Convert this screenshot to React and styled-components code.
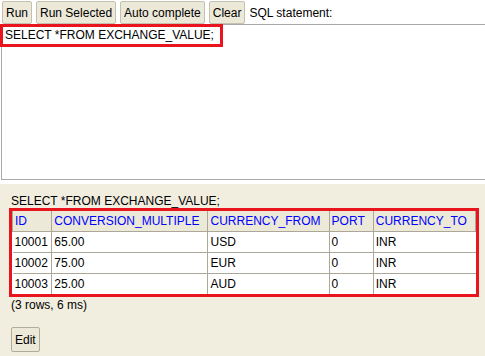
import React from "react";
import styled, { createGlobalStyle } from "styled-components";

const GlobalStyle = createGlobalStyle`
  body {
    margin: 0;
    background: #ffffff;
    font-family: "Liberation Sans", Arial, sans-serif;
    font-size: 12px;
    color: #000000;
  }
`;

const Page = styled.div`
  width: 485px;
  height: 356px;
  display: flex;
  flex-direction: column;
  overflow: hidden;
`;

const Toolbar = styled.div`
  display: flex;
  align-items: center;
  gap: 4px;
  padding: 1px 2px 0;
  height: 23px;
`;

const Button = styled.button`
  font-family: "Liberation Sans", Arial, sans-serif;
  font-size: 12px;
  height: 23px;
  padding: 0 3px;
  margin: 0;
  background: #ece9d8;
  border: 1px solid #c4c1b0;
  border-radius: 2px;
  color: #000;
  cursor: pointer;
`;

const Label = styled.span`
  font-size: 12px;
`;

const Editor = styled.div`
  position: relative;
  height: 154px;
  margin-left: 1px;
  border: 1px solid #a8a8a8;
  border-right: none;
`;

const Highlight = styled.div`
  position: absolute;
  left: -2px;
  top: -1px;
  width: 215px;
  height: 17px;
  border: 3px solid #e8141e;
  padding-left: 2px;
  line-height: 17px;
  white-space: nowrap;
`;

const Results = styled.div`
  flex: 1;
  margin-top: 4px;
  background: #f2eedf;
  padding: 10px 6px 0 9px;
`;

const Query = styled.div`
  padding-left: 2px;
  line-height: 14px;
  height: 14px;
`;

const TableFrame = styled.div`
  border: 3px solid #e8141e;
  width: 464px;
`;

const Table = styled.table`
  border-collapse: collapse;
  width: 100%;
  background: #ffffff;
`;

const HeadCell = styled.th`
  background: #ece9d8;
  color: #0000ff;
  font-weight: normal;
  text-align: left;
  height: 20px;
  padding: 0 2px;
  border: 1px solid #aca899;
  border-top: none;
  width: ${(p) => p.$w}px;
`;

const Cell = styled.td`
  height: 20px;
  padding: 0 2px;
  border: 1px solid #aca899;
  &:first-child { border-left: none; }
  &:last-child { border-right: none; }
  tr:last-child & { border-bottom: none; }
`;

const Stats = styled.div`
  margin-top: 1px;
  padding-left: 2px;
`;

const EditButton = styled(Button)`
  margin: 15px 0 0 2px;
  height: 25px;
  padding: 0 3px;
  border-color: #b0ad9c;
`;

const columns = [
  { name: "ID", w: 35 },
  { name: "CONVERSION_MULTIPLE", w: 154 },
  { name: "CURRENCY_FROM", w: 119 },
  { name: "PORT", w: 42 },
  { name: "CURRENCY_TO", w: 100 },
];

const rows = [
  ["10001", "65.00", "USD", "0", "INR"],
  ["10002", "75.00", "EUR", "0", "INR"],
  ["10003", "25.00", "AUD", "0", "INR"],
];

export default function App() {
  return (
    <>
      <GlobalStyle />
      <Page>
        <Toolbar>
          <Button>Run</Button>
          <Button>Run Selected</Button>
          <Button>Auto complete</Button>
          <Button>Clear</Button>
          <Label>SQL statement:</Label>
        </Toolbar>
        <Editor>
          <Highlight>SELECT *FROM EXCHANGE_VALUE;</Highlight>
        </Editor>
        <Results>
          <Query>SELECT *FROM EXCHANGE_VALUE;</Query>
          <TableFrame>
            <Table>
              <thead>
                <tr>
                  {columns.map((c, i) => (
                    <HeadCell key={i} $w={c.w}>
                      {c.name}
                    </HeadCell>
                  ))}
                </tr>
              </thead>
              <tbody>
                {rows.map((r, i) => (
                  <tr key={i}>
                    {r.map((v, j) => (
                      <Cell key={j}>{v}</Cell>
                    ))}
                  </tr>
                ))}
              </tbody>
            </Table>
          </TableFrame>
          <Stats>(3 rows, 6 ms)</Stats>
          <EditButton>Edit</EditButton>
        </Results>
      </Page>
    </>
  );
}
